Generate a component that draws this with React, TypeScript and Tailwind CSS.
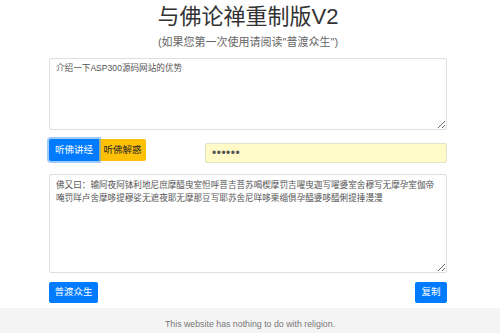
import React from 'react';

const font = { fontFamily: '"Liberation Sans", "Noto Sans CJK SC", sans-serif' };

const spell =
  '佛又曰：输阿夜阿钵利地尼庶摩醯曳室怛呼菩吉菩苏喝楔摩罚吉嚁曳迦写嚁婆室舍穆写无摩孕室伽帝唵罚咩卢舍摩哆提穆娑无遮夜耶无摩那豆写耶苏舍尼咩哆栗缁俱孕醯婆哆醯俐提捶漫漫';

export default function App() {
  return (
    <div className="w-[500px] h-[333px] overflow-hidden bg-white flex flex-col" style={font}>
      <div className="pl-[49px]">
        <div className="w-[398px]">
          {/* header */}
          <h1 className="pt-[2px] text-center text-[22px] leading-[30px] text-[#333]">
            与佛论禅重制版V2
          </h1>
          <p className="pt-[2px] text-center text-[11px] leading-[17px] text-[#666]">
            (如果您第一次使用请阅读"普渡众生")
          </p>

          {/* input */}
          <textarea
            className="mt-[7px] block w-[398px] h-[72px] rounded-[2px] border border-[#dcdfe3] px-[6px] py-[3px] text-[8.6px] leading-[13px] text-[#555] outline-none"
            defaultValue="介绍一下ASP300源码网站的优势"
          />

          {/* actions */}
          <div className="mt-[9px] flex items-start justify-between">
            <div className="flex">
              <button className="h-[22px] w-[50px] rounded-l-[2px] bg-[#007bff] text-[9.5px] text-white shadow-[0_0_0_2px_rgba(80,160,255,0.55)] relative z-10">
                听佛讲经
              </button>
              <button className="h-[22px] w-[47px] rounded-r-[2px] bg-[#ffc107] text-[9.5px] text-[#212529]">
                听佛解惑
              </button>
            </div>
            <input
              type="password"
              defaultValue="123456"
              className="mt-[4px] h-[20px] w-[242px] rounded-[2px] border border-[#e3e3c8] bg-[#fffac8] px-[6px] text-[12px] tracking-[0.5px] text-[#555] outline-none"
            />
          </div>

          {/* output */}
          <textarea
            className="mt-[11px] block w-[398px] h-[99px] rounded-[2px] border border-[#dcdfe3] px-[6px] py-[4px] text-[8.6px] leading-[13px] text-[#555] outline-none"
            defaultValue={spell}
          />

          <div className="mt-[9px] flex justify-between">
            <button className="h-[21px] w-[49px] rounded-[2px] bg-[#007bff] text-[9.5px] text-white">普渡众生</button>
            <button className="h-[21px] w-[32px] rounded-[2px] bg-[#007bff] text-[9.5px] text-white">复制</button>
          </div>
        </div>
      </div>

      <footer className="mt-[5px] flex-1 bg-[#f4f4f4] pt-[10px] text-center text-[8.8px] leading-[12px] text-[#777]">
        This website has nothing to do with religion.
      </footer>
    </div>
  );
}
